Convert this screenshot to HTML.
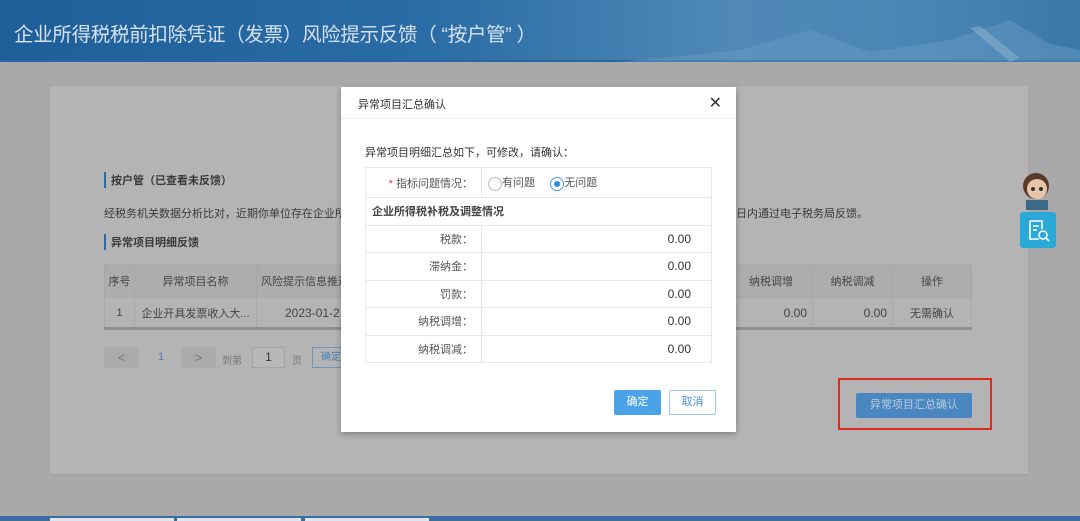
<!DOCTYPE html>
<html><head><meta charset="utf-8"><style>
*{margin:0;padding:0;box-sizing:border-box}
body{width:1080px;height:521px;overflow:hidden;background:#a9a9a9;font-family:"Liberation Sans","Noto Sans CJK SC",sans-serif;position:relative;color:#333}
.hdr{position:absolute;left:0;top:0;width:1080px;height:62px;background:linear-gradient(90deg,#1f5f99 0%,#2a6ca6 40%,#5089b6 68%,#4a86b4 85%,#3a78aa 100%);border-bottom:2px solid #2a66a0}
.hdr h1{position:absolute;left:14px;top:18px;font-size:19.5px;font-weight:normal;color:#d6e2ee;letter-spacing:-0.3px}
.panel{position:absolute;left:50px;top:86px;width:978px;height:388px;background:#b4b4b4;box-shadow:0 1px 2px #9e9e9e}
.a{position:absolute;font-size:11px;color:#3a3a3a;white-space:nowrap}
.bar{border-left:2px solid #2d6aa8;padding-left:5px;font-weight:bold}
table{border-collapse:collapse;position:absolute;font-size:11px}
.bt td{border:1px solid #a8a8a8;color:#444;text-align:center}
.modal{position:absolute;left:341px;top:87px;width:395px;height:345px;background:#fff;box-shadow:0 2px 6px rgba(0,0,0,.3)}
.mt td{border:1px solid #e8e8e8;height:27.5px;color:#555;font-size:11px}
.mt td.l{width:116px;text-align:right;padding-right:8px}
.mt td.r{text-align:right;padding-right:20px;color:#333;font-size:12px}
.btn{position:absolute;font-size:11px;text-align:center;line-height:25px;border-radius:2px}
</style></head><body>
<div class="hdr"><h1>企业所得税税前扣除凭证（发票）风险提示反馈（ “按户管” ）</h1>
<svg style="position:absolute;left:620px;top:18px" width="460" height="44"><path d="M0 44 L120 32 L190 12 L250 34 L330 22 L390 2 L430 26 L460 32 L460 44Z" fill="#6a9ec6" opacity=".45"/><path d="M350 10 L360 8 L400 40 L390 44Z" fill="#8fb4d2" opacity=".5"/></svg></div>
<div class="panel"></div>
<div class="a bar" style="left:104px;top:172px">按户管（已查看未反馈）</div>
<div class="a" style="left:104px;top:205px">经税务机关数据分析比对，近期你单位存在企业所</div>
<div class="a" style="left:736px;top:205px">日内通过电子税务局反馈。</div>
<div class="a bar" style="left:104px;top:234px">异常项目明细反馈</div>
<table class="bt" style="left:104px;top:264px;width:868px">
<tr style="height:33px;background:#adadad"><td style="width:30px">序号</td><td style="width:122px">异常项目名称</td><td style="text-align:left;padding-left:4px">风险提示信息推送</td><td style="width:83px">纳税调增</td><td style="width:80px">纳税调减</td><td style="width:79px">操作</td></tr>
<tr style="height:30px"><td>1</td><td>企业开具发票收入大...</td><td style="text-align:left;padding-left:28px;font-size:12px">2023-01-2</td><td style="text-align:right;padding-right:5px;font-size:12px">0.00</td><td style="text-align:right;padding-right:5px;font-size:12px">0.00</td><td>无需确认</td></tr>
</table>
<div style="position:absolute;left:104px;top:327px;width:868px;height:3px;background:#8f8f8f"></div>
<div style="position:absolute;left:104px;top:347px;width:35px;height:21px;background:#ababab;color:#777;text-align:center;font-size:13px;line-height:21px">&lt;</div>
<div class="a" style="left:158px;top:351px;color:#4a7fb5">1</div>
<div style="position:absolute;left:181px;top:347px;width:35px;height:21px;background:#ababab;color:#777;text-align:center;font-size:13px;line-height:21px">&gt;</div>
<div class="a" style="left:222px;top:352px;font-size:10px;color:#777">到第</div>
<div style="position:absolute;left:252px;top:347px;width:33px;height:21px;background:#b8b8b8;border:1px solid #a5a5a5;text-align:center;font-size:12px;line-height:19px">1</div>
<div class="a" style="left:292px;top:352px;font-size:10px;color:#777">页</div>
<div style="position:absolute;left:312px;top:347px;width:30px;height:21px;border:1px solid #6d94bf;font-size:10px;color:#4a7fb5;line-height:19px;padding-left:8px">确定</div>
<div style="position:absolute;left:838px;top:378px;width:154px;height:52px;border:2px solid #e02a20"></div>
<div class="btn" style="left:856px;top:393px;width:116px;background:#4a86bf;color:#b8cde0">异常项目汇总确认</div>
<svg style="position:absolute;left:1016px;top:170px" width="40" height="42"><circle cx="20" cy="16" r="13" fill="#5b3a2a"/><circle cx="21" cy="19" r="10" fill="#e8c4a8"/><circle cx="17" cy="19" r="2" fill="#333"/><circle cx="25" cy="19" r="2" fill="#333"/><rect x="10" y="30" width="22" height="10" fill="#3e6a8a"/></svg>
<div style="position:absolute;left:1020px;top:212px;width:36px;height:36px;background:#2aa8d8;border-radius:3px"><svg width="36" height="36"><path d="M10 9h12v8M10 9v18h9M13 14h6M13 18h4" stroke="#fff" stroke-width="1.6" fill="none"/><circle cx="23" cy="23" r="4" stroke="#fff" stroke-width="1.6" fill="none"/><path d="M26 26l3 3" stroke="#fff" stroke-width="1.6"/></svg></div>
<div style="position:absolute;left:0;top:516px;width:1080px;height:5px;background:#3b6e9e"></div>
<div style="position:absolute;left:50px;top:518px;width:124px;height:3px;background:#dde6ee"></div>
<div style="position:absolute;left:177px;top:518px;width:124px;height:3px;background:#dde6ee"></div>
<div style="position:absolute;left:305px;top:518px;width:124px;height:3px;background:#dde6ee"></div>
<div class="modal">
<div style="height:32px;border-bottom:1px solid #eee;font-size:11px;padding:9px 0 0 17px;color:#333">异常项目汇总确认<span style="position:absolute;right:14px;top:6px;font-size:16px;color:#333">✕</span></div>
<div style="position:absolute;left:24px;top:57px;font-size:11px;color:#333">异常项目明细汇总如下，可修改，请确认：</div>
<table class="mt" style="left:24px;top:80px;width:347px">
<tr style="height:30px"><td class="l"><span style="color:#e33">*</span> 指标问题情况：</td><td style="padding-left:6px"><span style="display:inline-block;width:14px;height:14px;border:1px solid #bbb;border-radius:50%;vertical-align:middle"></span>有问题 &nbsp;&nbsp;&nbsp;&nbsp;<span style="display:inline-block;width:14px;height:14px;border:1px solid #4a9ee0;border-radius:50%;vertical-align:middle;position:relative"><span style="position:absolute;left:3px;top:3px;width:6px;height:6px;border-radius:50%;background:#2d8ad8"></span></span>无问题</td></tr>
<tr style="height:25px"><td colspan="2" style="padding-left:6px;font-weight:bold;color:#444">企业所得税补税及调整情况</td></tr>
<tr><td class="l">税款：</td><td class="r">0.00</td></tr>
<tr><td class="l">滞纳金：</td><td class="r">0.00</td></tr>
<tr><td class="l">罚款：</td><td class="r">0.00</td></tr>
<tr><td class="l">纳税调增：</td><td class="r">0.00</td></tr>
<tr><td class="l">纳税调减：</td><td class="r">0.00</td></tr>
</table>
<div class="btn" style="left:273px;top:303px;width:47px;background:#4aa3e8;color:#fff">确定</div>
<div class="btn" style="left:328px;top:303px;width:47px;border:1px solid #9cc6ec;color:#4a8fd0;line-height:23px">取消</div>
</div>
</body></html>
